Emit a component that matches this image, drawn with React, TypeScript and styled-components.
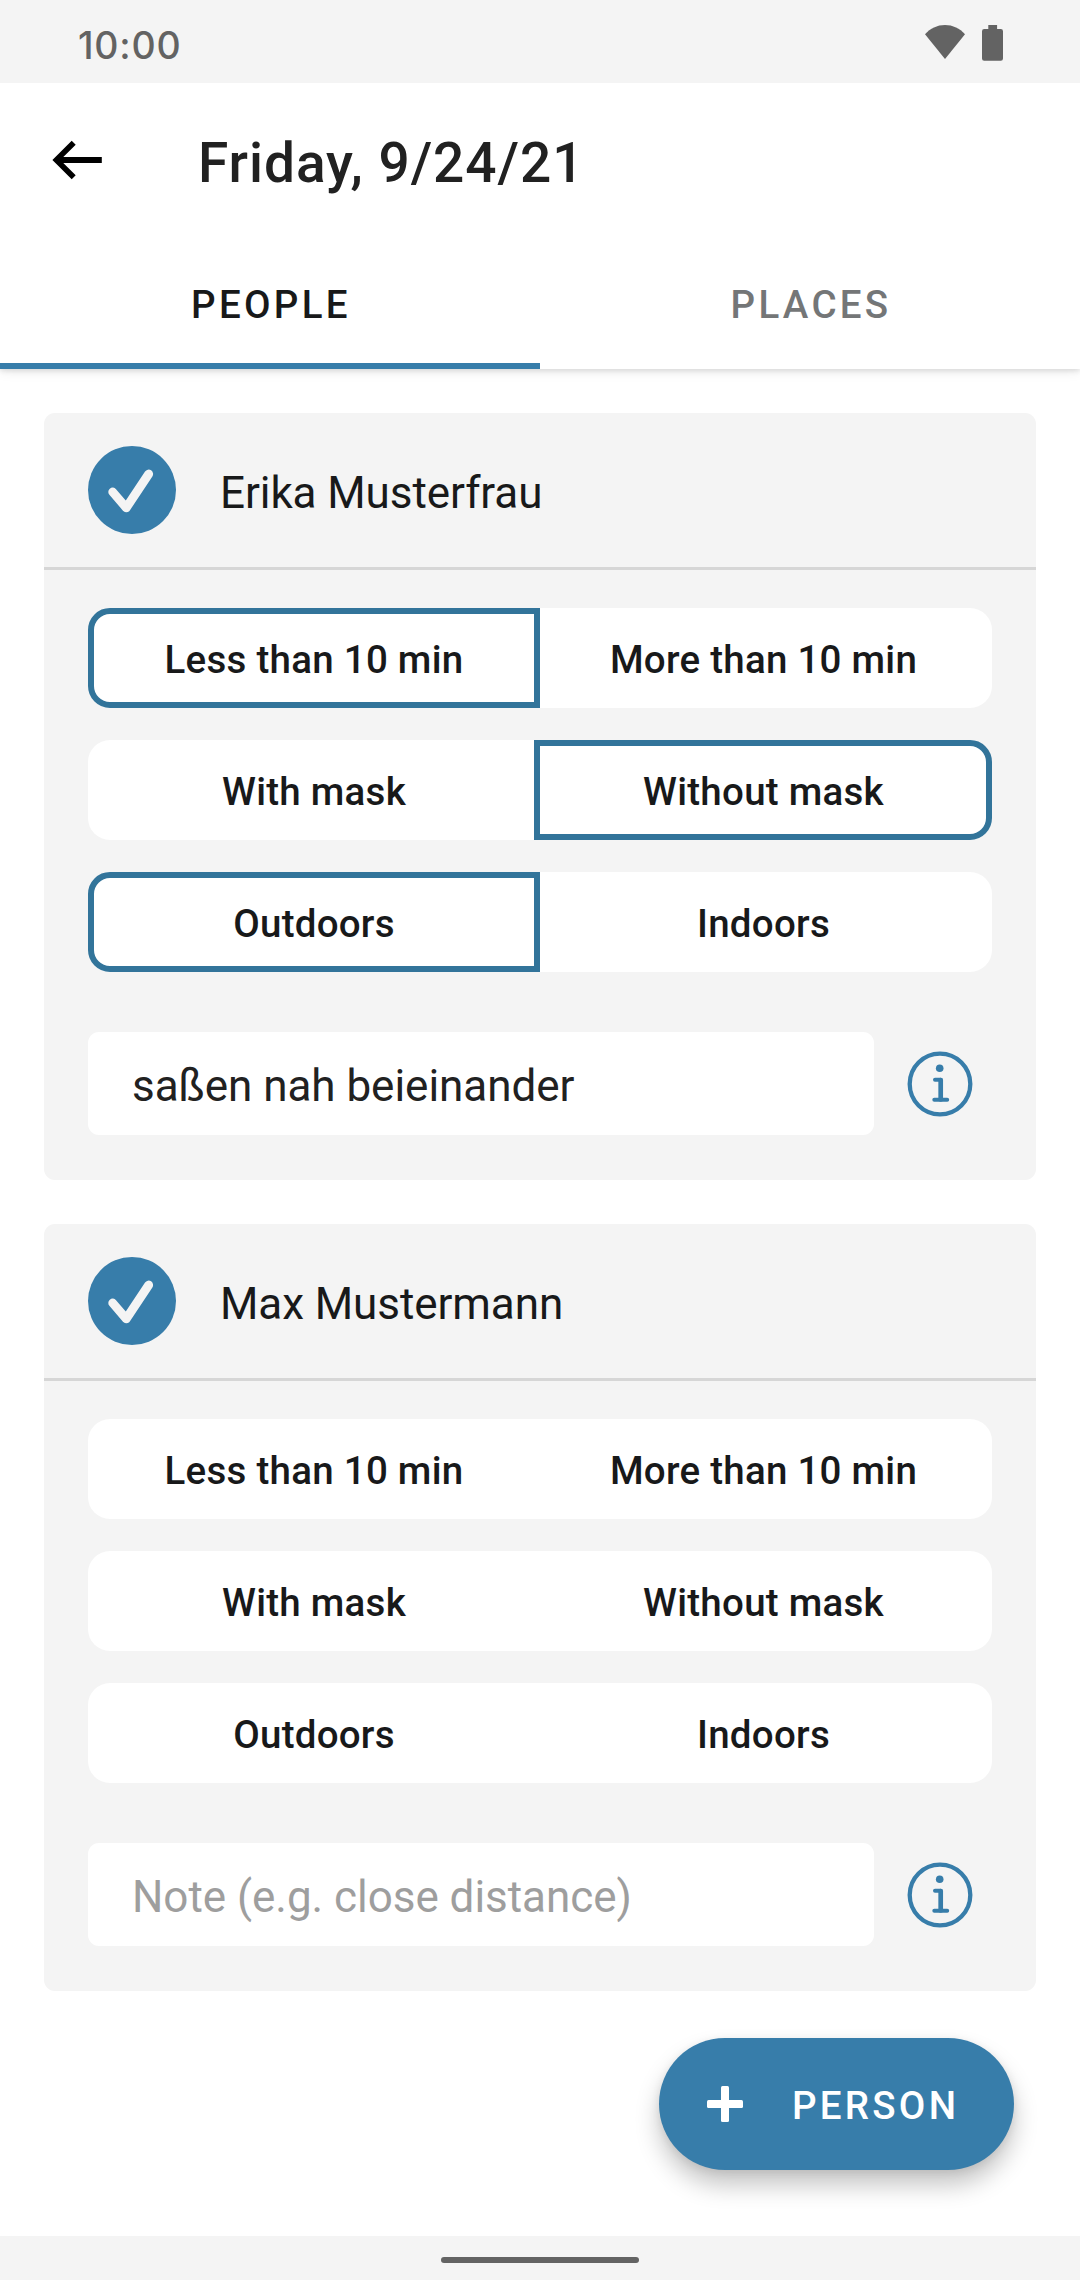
import React, { useState } from "react";
import styled, { createGlobalStyle, css } from "styled-components";

const blue = "#377DAA";
const darkBlue = "#32749A";
const surface = "#F4F4F4";
const ink = "#18191A";

const GlobalStyle = createGlobalStyle`
  *, *::before, *::after { box-sizing: border-box; }
  body { margin: 0; background: #fff; font-family: Roboto, "Noto Sans", sans-serif; }
  button, input { font: inherit; border: 0; margin: 0; padding: 0; background: none; }
  h1, h2 { margin: 0; font: inherit; }
`;

const Screen = styled.div`
  display: flex;
  flex-direction: column;
  width: 1080px;
  height: 2280px;
  background: #fff;
  overflow: hidden;
`;

const StatusBar = styled.div`
  position: relative;
  z-index: 1;
  display: flex;
  align-items: center;
  height: 83px;
  padding: 0 77px 0 78px;
  background: ${surface};
  color: #636363;
`;

const Clock = styled.span`
  flex: 1;
  padding-top: 8px;
  font-family: Inter, sans-serif;
  font-size: 37.5px;
  font-weight: 500;
  line-height: 44px;
  letter-spacing: 0.8px;
`;

const StatusIcons = styled.div`
  display: flex;
  align-items: flex-start;
  gap: 17px;
  padding-top: 3px;
`;

const Header = styled.header`
  position: relative;
  background: #fff;
  box-shadow: 0 2px 5px rgba(0, 0, 0, 0.11), 0 4px 11px rgba(0, 0, 0, 0.06);
`;

const TitleRow = styled.div`
  display: flex;
  align-items: center;
  height: 154px;
  padding-left: 52px;
`;

const BackButton = styled.button`
  display: flex;
  width: 146px;
  color: #000;
`;

const Title = styled.h1`
  padding-top: 5px;
  font-size: 55px;
  font-weight: 500;
  line-height: 64px;
  letter-spacing: 0.96px;
  color: #212121;
`;

const Tabs = styled.nav`
  display: flex;
  height: 132px;
`;

const Tab = styled.button<{ $active: boolean }>`
  flex: 1;
  padding: 10px 0 0 2px;
  border-bottom: 6px solid ${(p) => (p.$active ? blue : "transparent")};
  font-size: 38.5px;
  font-weight: 500;
  line-height: 46px;
  letter-spacing: 3.3px;
  color: ${(p) => (p.$active ? ink : "#747677")};
`;

const Content = styled.main`
  display: flex;
  flex: 1;
  flex-direction: column;
  gap: 44px;
  padding: 44px 44px 0;
`;

const Card = styled.section`
  border-radius: 11px;
  background: ${surface};
`;

const CardHeader = styled.div`
  display: flex;
  align-items: center;
  gap: 44px;
  height: 157px;
  padding: 0 44px;
  border-bottom: 3px solid #d6d6d6;
`;

const Name = styled.h2`
  padding-top: 5px;
  font-size: 44px;
  line-height: 52px;
  letter-spacing: -0.08px;
  color: ${ink};
`;

const CardBody = styled.div`
  display: flex;
  flex-direction: column;
  gap: 32px;
  padding: 38px 44px 45px;
`;

const ToggleRow = styled.div`
  display: flex;
  height: 100px;
  border-radius: 22px;
  background: #fff;
`;

const Toggle = styled.button<{ $side: "left" | "right"; $selected: boolean }>`
  flex: 0 0 452px;
  padding-top: 3px;
  font-size: 38.5px;
  font-weight: 500;
  line-height: 46px;
  letter-spacing: 0.26px;
  color: ${ink};
  border: 6px solid transparent;
  border-radius: ${(p) => (p.$side === "left" ? "22px 0 0 22px" : "0 22px 22px 0")};
  ${(p) =>
    p.$selected &&
    css`
      border-color: ${darkBlue};
    `}
  ${(p) =>
    p.$side === "right" &&
    css`
      flex-basis: 458px;
      margin-left: -6px;
      padding-left: 1px;
    `}
`;

const NoteRow = styled.div`
  display: flex;
  align-items: center;
  gap: 33px;
  margin-top: 28px;
`;

const NoteInput = styled.input`
  width: 786px;
  height: 103px;
  padding: 5px 44px 0;
  border-radius: 11px;
  background: #fff;
  font-size: 44px;
  letter-spacing: -0.03px;
  color: #212121;
  outline: none;
  &::placeholder { color: #9e9e9e; opacity: 1; }
`;

const InfoButton = styled.button`
  display: flex;
  padding-top: 1px;
  color: ${blue};
`;

const Fab = styled.button`
  display: flex;
  align-items: center;
  align-self: flex-end;
  width: 355px;
  height: 132px;
  margin: 3px 22px 0 0;
  padding-left: 48px;
  border-radius: 66px;
  background: ${blue};
  color: #fff;
  box-shadow: 0 15px 24px rgba(0, 0, 0, 0.23), 0 2px 9px rgba(0, 0, 0, 0.08);
`;

const FabLabel = styled.span`
  padding: 3px 0 0 49px;
  font-size: 38.5px;
  font-weight: 500;
  line-height: 46px;
  letter-spacing: 3.25px;
`;

const NavBar = styled.div`
  display: flex;
  justify-content: center;
  height: 44px;
  padding-top: 21px;
  background: ${surface};
`;

const Handle = styled.div`
  width: 198px;
  height: 6px;
  border-radius: 3px;
  background: #636363;
`;

const WifiIcon = () => (
  <svg width="40" height="34" viewBox="0 0 40 34" fill="currentColor">
    <path d="M20 34 0 9.2C5.2 3.4 12.200 0 20 0s14.800 3.400 20 9.200z" />
  </svg>
);

const BatteryIcon = () => (
  <svg width="21" height="36" viewBox="0 0 21 36" fill="currentColor">
    <path d="M6.300 0h8.800v4h3.700A2.200 2.200 0 0 1 21 6.200v27.300a2.200 2.200 0 0 1-2.200 2.200H2.200A2.200 2.200 0 0 1 0 33.500V6.200A2.200 2.200 0 0 1 2.200 4h4.100z" />
  </svg>
);

const BackIcon = () => (
  <svg width="50" height="40" viewBox="0 0 50 40" fill="currentColor">
    <path d="M49.800 17.100H11.300L23.700 4.700 19.700.7.400 20l19.300 19.300 4-4L11.300 22.900h38.500z" />
  </svg>
);

const CheckIcon = () => (
  <svg width="88" height="88" viewBox="0 0 88 88" fill="none">
    <circle cx="44" cy="44" r="44" fill={blue} />
    <path d="M24.700 46 38.300 61.800 60.700 28" stroke={surface} strokeWidth="8.800" strokeLinecap="round" strokeLinejoin="round" />
  </svg>
);

const InfoIcon = () => (
  <svg width="66" height="66" viewBox="0 0 66 66" fill="none" stroke="currentColor" strokeLinecap="round" strokeLinejoin="round">
    <circle cx="33" cy="33" r="30.300" strokeWidth="4.300" />
    <circle cx="32.700" cy="17.300" r="3.800" fill="currentColor" stroke="none" />
    <path d="M28 28.700h5.700M27.300 48.800h12.900" strokeWidth="4" />
    <path d="M33.700 29v19.500" strokeWidth="4.700" />
  </svg>
);

const PlusIcon = () => (
  <svg width="36" height="36" viewBox="0 0 36 36" fill="currentColor">
    <rect x="14" width="8" height="36" rx="1.500" />
    <rect y="14" width="36" height="8" rx="1.500" />
  </svg>
);

const questions = [
  ["Less than 10 min", "More than 10 min"],
  ["With mask", "Without mask"],
  ["Outdoors", "Indoors"],
];

interface PersonProps {
  name: string;
  initial: (number | null)[];
  note?: string;
}

function PersonCard({ name, initial, note = "" }: PersonProps) {
  const [answers, setAnswers] = useState(initial);
  const choose = (row: number, value: number) =>
    setAnswers((all) => all.map((a, i) => (i === row ? (a === value ? null : value) : a)));

  return (
    <Card>
      <CardHeader>
        <CheckIcon />
        <Name>{name}</Name>
      </CardHeader>
      <CardBody>
        {questions.map((labels, row) => (
          <ToggleRow key={labels[0]}>
            {labels.map((label, i) => (
              <Toggle
                key={label}
                $side={i === 0 ? "left" : "right"}
                $selected={answers[row] === i}
                onClick={() => choose(row, i)}
              >
                {label}
              </Toggle>
            ))}
          </ToggleRow>
        ))}
        <NoteRow>
          <NoteInput defaultValue={note} placeholder="Note (e.g. close distance)" />
          <InfoButton aria-label="Info">
            <InfoIcon />
          </InfoButton>
        </NoteRow>
      </CardBody>
    </Card>
  );
}

export default function App() {
  const [tab, setTab] = useState("PEOPLE");
  return (
    <Screen>
      <GlobalStyle />
      <StatusBar>
        <Clock>10:00</Clock>
        <StatusIcons>
          <WifiIcon />
          <BatteryIcon />
        </StatusIcons>
      </StatusBar>
      <Header>
        <TitleRow>
          <BackButton aria-label="Back">
            <BackIcon />
          </BackButton>
          <Title>Friday, 9/24/21</Title>
        </TitleRow>
        <Tabs>
          {["PEOPLE", "PLACES"].map((t) => (
            <Tab key={t} $active={t === tab} onClick={() => setTab(t)}>
              {t}
            </Tab>
          ))}
        </Tabs>
      </Header>
      <Content>
        <PersonCard name="Erika Musterfrau" initial={[0, 1, 0]} note="saßen nah beieinander" />
        <PersonCard name="Max Mustermann" initial={[null, null, null]} />
        <Fab>
          <PlusIcon />
          <FabLabel>PERSON</FabLabel>
        </Fab>
      </Content>
      <NavBar>
        <Handle />
      </NavBar>
    </Screen>
  );
}
